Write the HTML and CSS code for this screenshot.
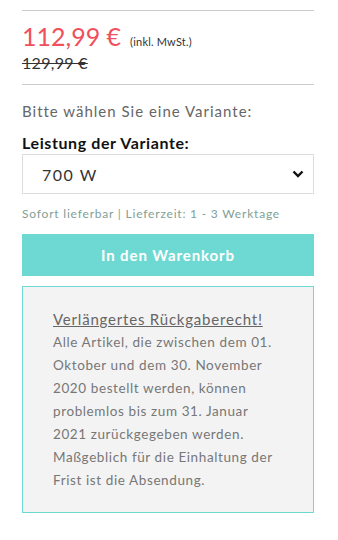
FILE: index.html
```html
<!DOCTYPE html>
<html lang="de">
<head>
  <meta charset="UTF-8" />
  <title>Produkt</title>
  <meta name="viewport" content="width=device-width, initial-scale=1.0" />
  <link rel="stylesheet" href="styles.css">
</head>
<body>
  <div class="product">
    <div class="price-box">
      <div class="price">
        <span class="price-now">112,99 €</span>
        <span class="tax">(inkl. MwSt.)</span>
      </div>
      <div class="price-old">129,99 €</div>
    </div>

    <p class="choose">Bitte wählen Sie eine Variante:</p>
    <label class="variant-label" for="variant">Leistung der Variante:</label>
    <div class="select-wrap">
      <select id="variant" class="variant-select">
        <option>700 W</option>
      </select>
      <svg class="chevron" width="12" height="8" viewBox="0 0 12 8">
        <path d="M1.5 1.5 L6 6 L10.5 1.5" fill="none" stroke="#111" stroke-width="2.4" />
      </svg>
    </div>
    <div class="delivery">Sofort lieferbar | Lieferzeit: 1 - 3 Werktage</div>

    <button class="cart-btn">In den Warenkorb</button>

    <div class="notice">
      <a href="#" class="notice-title">Verlängertes Rückgaberecht!</a>
      <p>Alle Artikel, die zwischen dem 01. Oktober und dem 30. November 2020 bestellt werden, können problemlos bis zum 31. Januar 2021 zurückgegeben werden. Maßgeblich für die Einhaltung der Frist ist die Absendung.</p>
    </div>
  </div>
</body>
</html>
```

FILE: styles.css
```css
body {
  margin: 0;
  background: #fff;
  font-family: Lato, 'Noto Sans', sans-serif;
  color: #666;
}
.product {
  padding: 10px 24px 0 22px;
}
.price-box {
  border-top: 1px solid #ccc;
  border-bottom: 1px solid #ccc;
  padding: 10px 0 12px;
}
.price {
  display: flex;
  align-items: baseline;
  gap: 9px;
}
.price-now {
  font-size: 25px;
  color: #f0505c;
}
.tax {
  font-size: 11px;
  color: #333;
  letter-spacing: 0.2px;
}
.price-old {
  font-size: 16px;
  color: #333;
  text-decoration: line-through;
  margin-top: 2px;
  letter-spacing: 0.3px;
}
.choose {
  margin: 17px 0 0;
  font-size: 15px;
  color: #666;
  letter-spacing: 1px;
}
.variant-label {
  display: block;
  margin-top: 13px;
  font-size: 16px;
  font-weight: bold;
  color: #111;
  letter-spacing: 0.6px;
}
.select-wrap {
  position: relative;
  margin-top: 2px;
}
.variant-select {
  display: block;
  width: 100%;
  height: 40px;
  border: 1px solid #ddd;
  background: #fff;
  padding: 0 19px;
  font-family: inherit;
  font-size: 16px;
  color: #333;
  letter-spacing: 1.5px;
  appearance: none;
  -webkit-appearance: none;
  border-radius: 0;
}
.chevron {
  position: absolute;
  right: 10px;
  top: 16px;
  pointer-events: none;
}
.delivery {
  margin-top: 12px;
  font-size: 12px;
  color: #7fa095;
  letter-spacing: 0.8px;
}
.cart-btn {
  display: block;
  width: 100%;
  height: 42px;
  margin-top: 13px;
  border: 0;
  background: #6ed9d2;
  color: #fff;
  font-family: inherit;
  font-size: 15px;
  font-weight: bold;
  letter-spacing: 0.9px;
  cursor: pointer;
}
.notice {
  margin-top: 10px;
  border: 1px solid #6ed9d2;
  background: #f3f3f3;
  padding: 21px 30px 20px 30px;
  font-size: 13.5px;
  line-height: 23px;
  color: #777;
  letter-spacing: 0.6px;
}
.notice-title {
  display: block;
  color: #666;
  font-size: 15px;
  letter-spacing: 0.8px;
  text-decoration: underline;
}
.notice p {
  margin: 0;
}
```
